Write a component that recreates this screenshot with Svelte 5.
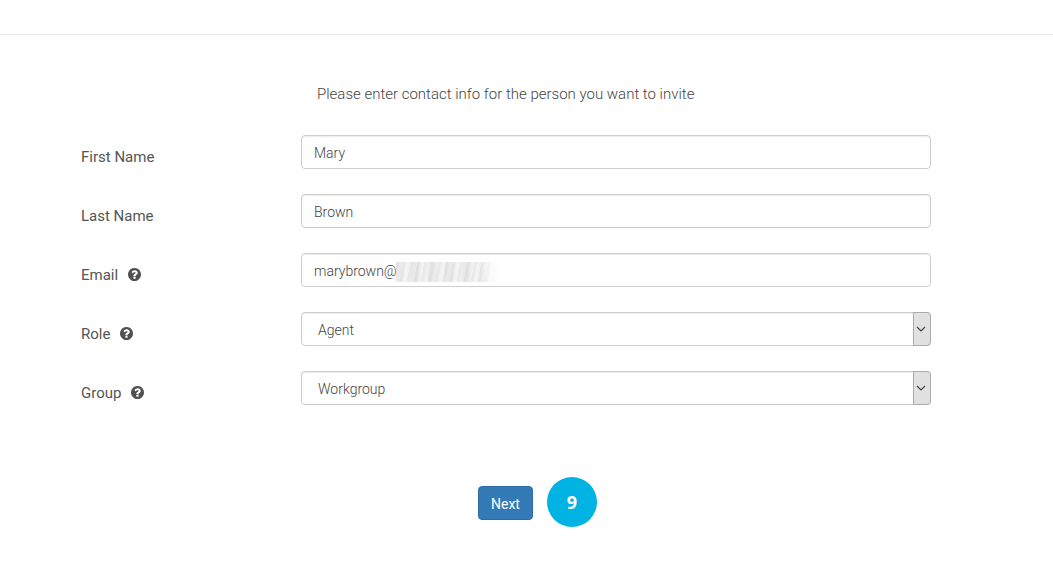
<script lang="ts">
  type Field = {
    id: string;
    label: string;
    help?: string;
  };

  const textFields: Field[] = [
    { id: 'first-name', label: 'First Name' },
    { id: 'last-name', label: 'Last Name' },
    { id: 'email', label: 'Email', help: 'Help for email' }
  ];

  const selectFields: (Field & { options: string[] })[] = [
    { id: 'role', label: 'Role', help: 'Help for role', options: ['Agent'] },
    { id: 'group', label: 'Group', help: 'Help for group', options: ['Workgroup'] }
  ];

  let values: Record<string, string> = $state({
    'first-name': 'Mary',
    'last-name': 'Brown',
    email: 'marybrown@',
    role: 'Agent',
    group: 'Workgroup'
  });
</script>

{#snippet fieldLabel(field: Field)}
  <div class="label">
    <label for={field.id}>{field.label}</label>
    {#if field.help}
      <svg class="help" viewBox="128 128 1536 1536" role="img" aria-label={field.help}>
        <path
          d="M1024 1376v-192q0-14-9-23t-23-9h-192q-14 0-23 9t-9 23v192q0 14 9 23t23 9h192q14 0 23-9t9-23zm256-672q0-88-55.500-163t-138.500-116-170-41q-243 0-371 213-15 24 8 42l132 100q7 6 19 6 16 0 25-12 53-68 86-92 34-24 86-24 48 0 85.500 26t37.500 59q0 38-20 61t-68 45q-63 28-115.500 86.500t-52.500 125.500v36q0 14 9 23t23 9h192q14 0 23-9t9-23q0-19 21.500-49.500t54.500-49.500q32-18 49-28.500t46-35 44.500-48 28-60.500 12.500-81zm384 192q0 209-103 385.500t-279.500 279.500-385.500 103-385.500-103-279.500-279.500-103-385.500 103-385.500 279.500-279.500 385.500-103 385.500 103 279.500 279.500 103 385.500z"
        />
      </svg>
    {/if}
  </div>
{/snippet}

<header></header>

<main>
  <form onsubmit={(event) => event.preventDefault()}>
    <p class="intro">Please enter contact info for the person you want to invite</p>

    {#each textFields as field (field.id)}
      <div class="row">
        {@render fieldLabel(field)}
        <div class="control">
          <input id={field.id} type="text" bind:value={values[field.id]} />
          {#if field.id === 'email'}
            <span class="redacted" aria-hidden="true"></span>
          {/if}
        </div>
      </div>
    {/each}

    {#each selectFields as field (field.id)}
      <div class="row">
        {@render fieldLabel(field)}
        <div class="control">
          <select id={field.id} bind:value={values[field.id]}>
            {#each field.options as option}
              <option>{option}</option>
            {/each}
          </select>
          <span class="arrow" aria-hidden="true">
            <svg viewBox="0 0 10 6">
              <path d="M1 1l4 4 4-4" />
            </svg>
          </span>
        </div>
      </div>
    {/each}

    <div class="actions">
      <button type="submit">Next</button>
      <span class="step">9</span>
    </div>
  </form>
</main>

<style>
  :global(body) {
    margin: 0;
    background: #fff;
    color: #555;
    font-family: Roboto, 'Liberation Sans', sans-serif;
    font-size: 15px;
    line-height: 20px;
  }

  header {
    height: 34px;
    border-bottom: 1px solid #e7e7e7;
  }

  main {
    padding: 49px 122px 50px 81px;
  }

  form {
    display: flex;
    flex-direction: column;
    gap: 25px;
  }

  .intro {
    margin: 0 0 6px 236px;
    font-weight: 300;
    color: #444;
  }

  .row {
    display: grid;
    grid-template-columns: 220px 1fr;
  }

  .label {
    display: flex;
    align-items: center;
    gap: 10px;
    padding-top: 9px;
  }

  .help {
    width: 13px;
    height: 13px;
    fill: #505050;
  }

  .control {
    position: relative;
  }

  input,
  select {
    display: block;
    box-sizing: border-box;
    width: 100%;
    height: 34px;
    padding: 1px 12px 0;
    border: 1px solid #ccc;
    border-radius: 4px;
    background: #fff;
    box-shadow: inset 0 1px 1px rgba(0, 0, 0, 0.08);
    color: #444;
    font-family: inherit;
    font-size: 14px;
    font-weight: 300;
  }

  select {
    appearance: none;
    padding: 1px 30px 0 16px;
  }

  .redacted {
    position: absolute;
    top: 9px;
    left: 95px;
    width: 102px;
    height: 20px;
    background:
      repeating-linear-gradient(100deg, rgba(0, 0, 0, 0.04) 0 2px, transparent 4px 7px),
      repeating-linear-gradient(94deg, #e9e9e9 0 5px, #f3f3f3 9px 14px, #e9e9e9 17px);
    mask-image: linear-gradient(90deg, #000 80%, transparent);
  }

  .arrow {
    position: absolute;
    top: 0;
    right: 0;
    bottom: 0;
    display: flex;
    align-items: center;
    justify-content: center;
    box-sizing: border-box;
    width: 18px;
    padding-right: 2px;
    border: 1px solid #aaa;
    border-radius: 0 4px 4px 0;
    background: #e1e1e1;
    pointer-events: none;
  }

  .arrow svg {
    width: 10px;
    height: 6px;
    fill: none;
    stroke: #444;
    stroke-width: 1.2;
  }

  .actions {
    display: flex;
    align-items: center;
    gap: 14px;
    margin: 47px 0 0 397px;
  }

  button {
    height: 34px;
    margin-top: 2px;
    padding: 1px 12px 0;
    border: 1px solid #2e6da4;
    border-radius: 4px;
    background: #337ab7;
    color: #fff;
    font-family: inherit;
    font-size: 14px;
    cursor: pointer;
  }

  .step {
    display: flex;
    align-items: center;
    justify-content: center;
    width: 50px;
    height: 50px;
    border-radius: 50%;
    background: #00b3e3;
    color: #fff;
    font-family: 'Open Sans', sans-serif;
    font-size: 18px;
    font-weight: 700;
  }
</style>
